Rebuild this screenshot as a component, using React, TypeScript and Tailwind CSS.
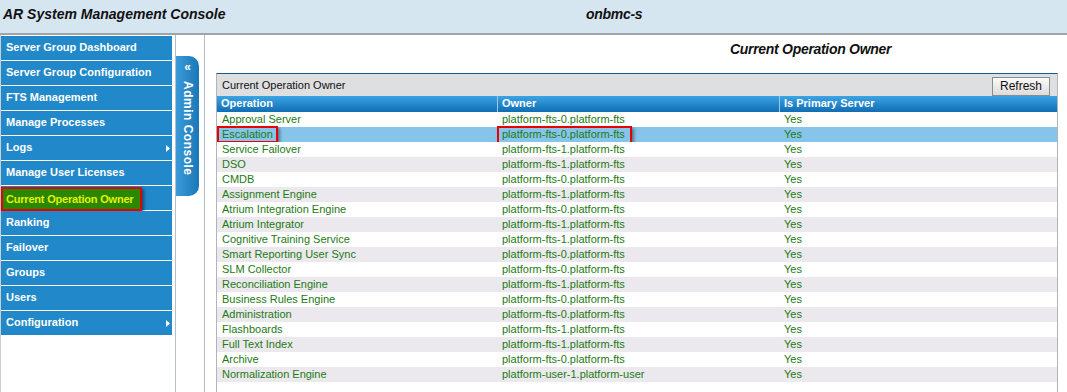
import React from "react";

const menu = [
  { label: "Server Group Dashboard" },
  { label: "Server Group Configuration" },
  { label: "FTS Management" },
  { label: "Manage Processes" },
  { label: "Logs", arrow: true },
  { label: "Manage User Licenses" },
  { label: "Current Operation Owner", active: true },
  { label: "Ranking" },
  { label: "Failover" },
  { label: "Groups" },
  { label: "Users" },
  { label: "Configuration", arrow: true },
];

const rows: [string, string][] = [
  ["Approval Server", "platform-fts-0.platform-fts"],
  ["Escalation", "platform-fts-0.platform-fts"],
  ["Service Failover", "platform-fts-1.platform-fts"],
  ["DSO", "platform-fts-1.platform-fts"],
  ["CMDB", "platform-fts-0.platform-fts"],
  ["Assignment Engine", "platform-fts-1.platform-fts"],
  ["Atrium Integration Engine", "platform-fts-0.platform-fts"],
  ["Atrium Integrator", "platform-fts-1.platform-fts"],
  ["Cognitive Training Service", "platform-fts-1.platform-fts"],
  ["Smart Reporting User Sync", "platform-fts-0.platform-fts"],
  ["SLM Collector", "platform-fts-0.platform-fts"],
  ["Reconciliation Engine", "platform-fts-1.platform-fts"],
  ["Business Rules Engine", "platform-fts-0.platform-fts"],
  ["Administration", "platform-fts-0.platform-fts"],
  ["Flashboards", "platform-fts-1.platform-fts"],
  ["Full Text Index", "platform-fts-1.platform-fts"],
  ["Archive", "platform-fts-0.platform-fts"],
  ["Normalization Engine", "platform-user-1.platform-user"],
];

function Arrow() {
  return (
    <svg width="4" height="7" viewBox="0 0 4 7" className="absolute right-[2px] top-[9px]">
      <path d="M0 0 L4 3.5 L0 7 Z" fill="#ffffff" />
    </svg>
  );
}

export default function App() {
  return (
    <div className="w-[1067px] h-[392px] overflow-hidden bg-white font-['Liberation_Sans',Arial,sans-serif] text-black">
      {/* header */}
      <div className="h-[35px] bg-[#d5e6f1] border-b-2 border-[#9ea4a8] flex items-center relative">
        <div className="pl-[3px] text-[14px] font-bold italic text-[#111] -mt-[5px]">AR System Management Console</div>
        <div className="absolute left-[586px] top-[4px] text-[14px] font-bold italic text-[#111] tracking-[-0.3px]">onbmc-s</div>
      </div>
      <div className="flex h-[357px]">
        {/* sidebar */}
        <div className="w-[176px] border-l border-[#c8d0d6] border-r border-r-[#b4bec6] pt-[1px] pr-[3px]">
          {menu.map((m) => (
            <div
              key={m.label}
              className="relative h-[25px] bg-[#2188c9] border-b border-white text-white text-[11px] font-bold flex items-center pl-[5px]"
            >
              {m.active ? (
                <div className="absolute left-0 top-[1px] w-[141px] h-[24px] bg-[#2a8800] border-2 border-[#e80000] shadow-[2px_2px_3px_rgba(0,0,0,0.45)] flex items-center pl-[3px] text-[#e6f000] tracking-[-0.2px]">
                  {m.label}
                </div>
              ) : (
                <span className="-mt-[2px]">{m.label}</span>
              )}
              {m.arrow && <Arrow />}
            </div>
          ))}
        </div>
        {/* admin console tab column */}
        <div className="w-[29px] border-r border-[#b4bec6] pt-[21px]">
          <div className="w-[23px] h-[140px] rounded-r-[10px] bg-gradient-to-r from-[#3a9ad8] to-[#1b78b8] flex flex-col items-center pt-[5px] text-white">
            <div className="text-[12px] leading-[12px] font-bold">«</div>
            <div className="mt-[8px] [writing-mode:vertical-rl] text-[12px] font-bold leading-[12px] tracking-[0.5px]">
              Admin Console
            </div>
          </div>
        </div>
        {/* content */}
        <div className="flex-1 flex flex-col">
          <div className="h-[38px] pl-[525px] pt-[4px] text-[14px] font-bold italic text-[#111] tracking-[-0.3px]">Current Operation Owner</div>
          <div className="ml-[11px] mr-[9px] flex-1 border-l border-r border-[#aeb6bd] border-t border-t-[#1d5b8c]">
            <div className="h-[22px] bg-[#dedfe0] flex items-center justify-between pl-[5px] pr-[7px]">
              <span className="text-[11px] text-[#111]">Current Operation Owner</span>
              <button className="h-[19px] w-[58px] mt-[2px] border border-[#8c8c8c] bg-gradient-to-b from-[#fbfbfb] to-[#dcdcdc] text-[12px] text-[#111] leading-[17px]">
                Refresh
              </button>
            </div>
            <div className="h-[16px] bg-gradient-to-b from-[#3ba4e4] to-[#0f6db4] flex text-white text-[11px] font-bold">
              <div className="w-[280px] pl-[4px] leading-[15px]">Operation</div>
              <div className="w-[282px] pl-[4px] leading-[15px] border-l border-[#9cc8e8]">Owner</div>
              <div className="flex-1 pl-[4px] leading-[15px] border-l border-[#9cc8e8]">Is Primary Server</div>
            </div>
            {rows.map(([op, owner], i) => {
              const sel = i === 1;
              const bg = sel ? "bg-[#86c4ea]" : i % 2 === 1 ? "bg-[#ebe9ed]" : "bg-white";
              return (
                <div key={op} className={`relative h-[15px] flex text-[11px] text-[#1e7a14] leading-[15px] ${bg}`}>
                  <div className="w-[280px] pl-[5px]">{op}</div>
                  <div className="w-[282px] pl-[5px]">{owner}</div>
                  <div className="flex-1 pl-[5px]">Yes</div>
                  {sel && (
                    <>
                      <div className="absolute left-0 top-[-1px] w-[61px] h-[17px] border-2 border-[#e80000] shadow-[2px_2px_3px_rgba(0,0,0,0.4)]" />
                      <div className="absolute left-[280px] top-[-1px] w-[135px] h-[19px] border-2 border-[#e80000] shadow-[2px_2px_3px_rgba(0,0,0,0.4)]" />
                    </>
                  )}
                </div>
              );
            })}
          </div>
        </div>
      </div>
    </div>
  );
}
